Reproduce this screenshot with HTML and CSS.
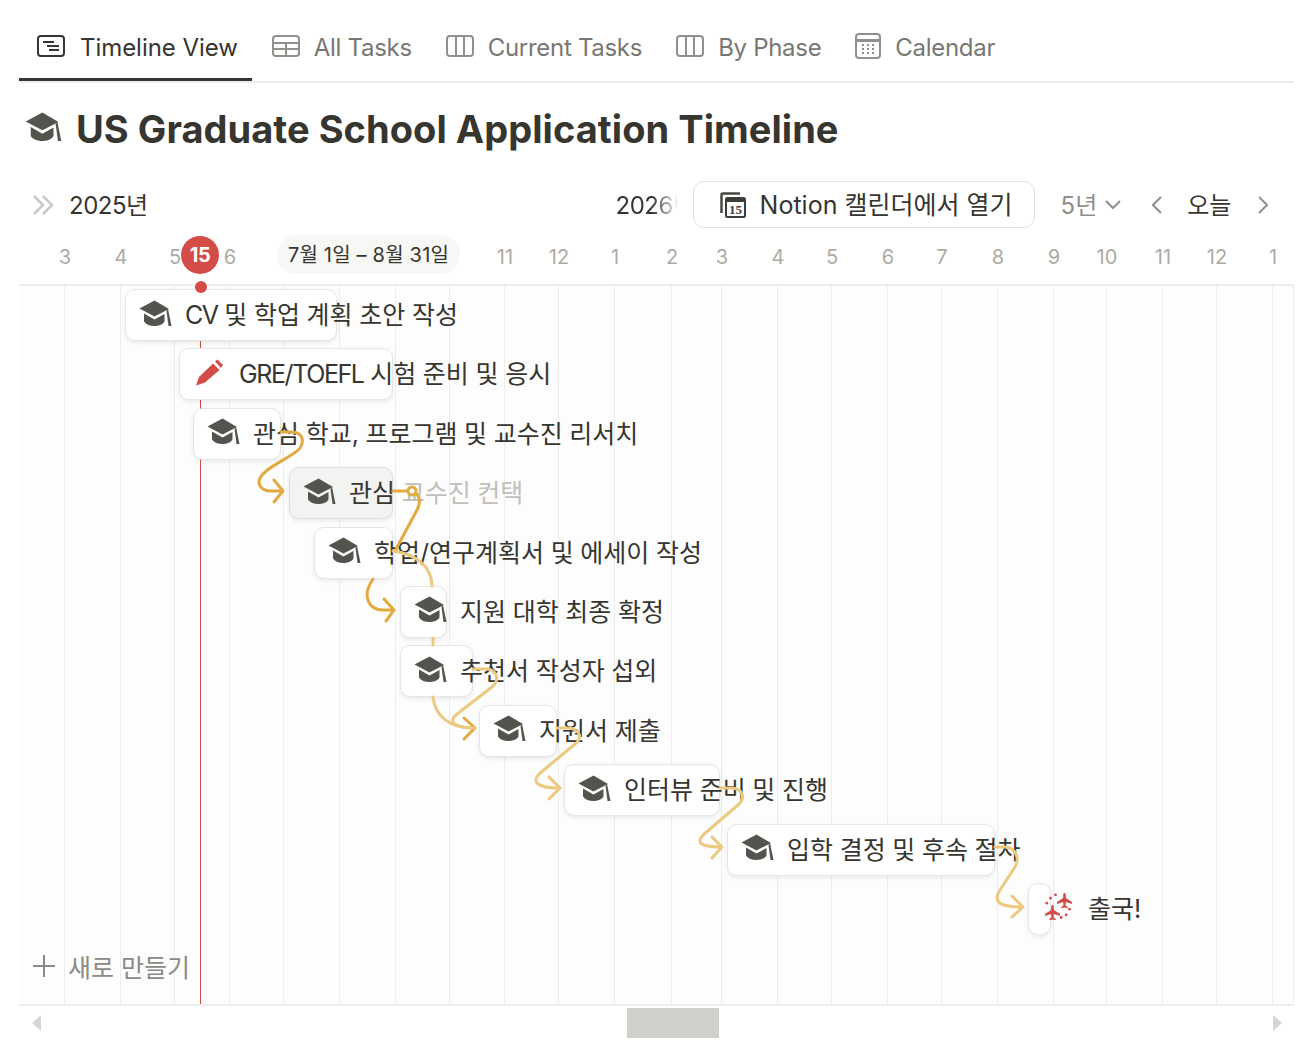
FILE: index.html
```html
<!DOCTYPE html>
<html lang="ko">
<head>
    <meta charset="UTF-8">
    <title>US Graduate School Application Timeline</title>
    <link rel="stylesheet" href="styles.css">
</head>
<body>
    <svg class="defs" width="0" height="0">
        <symbol id="cap" viewBox="0 0 33 27">
            <path d="M15.5 0.5 L0.5 8.5 L15.5 16.5 L30 9 Z" fill="#55534e"/>
            <path d="M5 13.5 L15.5 19.5 L25.5 14 V21.5 C23.5 25 19 26 15.5 26 C11 26 7 24.5 5 21.5 Z" fill="#55534e"/>
            <path d="M29 9 L32.5 26 H29.5 L27.5 11 Z" fill="#55534e"/>
        </symbol>
        <symbol id="plane" viewBox="-8 -8 16 16" overflow="visible">
            <path d="M-1.2 -6.5 Q0 -8.5 1.2 -6.5 L1.4 -2.5 L7.5 1.5 V3.5 L1.4 1.5 L1.1 5 L3.2 6.5 V7.8 L0 7 L-3.2 7.8 V6.5 L-1.1 5 L-1.4 1.5 L-7.5 3.5 V1.5 L-1.4 -2.5 Z" fill="#d44c47"/>
        </symbol>
    </svg>

    <div class="page">
        <nav class="tabs">
            <div class="tab active">
                <svg class="tab-icon" viewBox="0 0 28 22"><rect x="1" y="1" width="26" height="20" rx="3"/><path d="M6 7 H17 M10 11 H22 M12 15 H22"/></svg>
                Timeline View
            </div>
            <div class="tab">
                <svg class="tab-icon" viewBox="0 0 28 22"><rect x="1" y="1" width="26" height="20" rx="3"/><path d="M1 8 H27 M1 14 H27 M14 8 V21"/></svg>
                All Tasks
            </div>
            <div class="tab">
                <svg class="tab-icon" viewBox="0 0 28 22"><rect x="1" y="1" width="26" height="20" rx="3"/><path d="M10 1 V21 M18 1 V21"/></svg>
                Current Tasks
            </div>
            <div class="tab">
                <svg class="tab-icon" viewBox="0 0 28 22"><rect x="1" y="1" width="26" height="20" rx="3"/><path d="M10 1 V21 M18 1 V21"/></svg>
                By Phase
            </div>
            <div class="tab">
                <svg class="tab-icon tab-icon-cal" viewBox="0 0 26 26"><rect x="1" y="1" width="24" height="24" rx="3"/><path d="M1 7.5 H25" stroke-width="3"/><path d="M7 12 H9 M12 12 H14 M17 12 H19 M7 16 H9 M12 16 H14 M17 16 H19 M7 20 H9 M12 20 H14 M17 20 H19" stroke-width="2"/></svg>
                Calendar
            </div>
        </nav>

        <h1 class="title">
            <svg class="title-icon"><use href="#cap"/></svg>
            US Graduate School Application Timeline
        </h1>

        <div class="toolbar">
            <svg class="collapse" viewBox="0 0 22 20"><path d="M2 1 L11 10 L2 19 M11 1 L20 10 L11 19"/></svg>
            <span class="year">2025년</span>
            <span class="year year-next">2026년</span>
            <button class="open-btn">
                <svg class="cal-icon" viewBox="0 0 26 26">
                    <path d="M1.5 21 V3 Q1.5 1.5 3 1.5 H20" fill="none" stroke="#4a4843" stroke-width="2.5"/>
                    <rect x="6" y="6" width="19" height="19" rx="1.5" fill="#fff" stroke="#3f3d39" stroke-width="2"/>
                    <rect x="6" y="6" width="19" height="4" fill="#3f3d39"/>
                    <text x="15.5" y="22" class="cal-num">15</text>
                </svg>
                <span class="nudge">Notion 캘린더에서 열기</span>
            </button>
            <span class="zoom">5년</span>
            <svg class="chev chev-down" viewBox="0 0 16 10"><path d="M1 1 L8 8 L15 1"/></svg>
            <svg class="chev chev-prev" viewBox="0 0 10 18"><path d="M9 1 L1 9 L9 17"/></svg>
            <span class="today">오늘</span>
            <svg class="chev chev-next" viewBox="0 0 10 18"><path d="M1 1 L9 9 L1 17"/></svg>
        </div>

        <div class="months cols">
            <span></span>
            <span>3</span><span>4</span><span>5</span><span>6</span>
            <span></span><span></span><span></span><span></span>
            <span>11</span><span>12</span><span>1</span><span>2</span><span>3</span><span>4</span><span>5</span><span>6</span><span>7</span><span>8</span><span>9</span><span>10</span><span>11</span><span>12</span><span>1</span>
            <div class="today-badge">15</div>
            <div class="range-pill">7월 1일 – 8월 31일</div>
        </div>

        <div class="chart">
            <div class="gridlines cols">
                <i></i><i></i><i></i><i></i><i></i><i></i><i></i><i></i><i></i><i></i><i></i><i></i>
                <i></i><i></i><i></i><i></i><i></i><i></i><i></i><i></i><i></i><i></i><i></i><i></i>
            </div>
            <div class="today-line"></div>
            <div class="today-dot"></div>

            <div class="row"><div class="bar" style="margin-left:106px;width:212px"><svg class="cap"><use href="#cap"/></svg><span><span class="latin">CV</span> 및 학업 계획 초안 작성</span></div></div>
            <div class="row"><div class="bar" style="margin-left:160px;width:214px">
                <svg class="cap" viewBox="0 0 33 27"><path d="M3 26.5 L6 18 L20 4.5 L26.5 11 L12 23.5 Z M22 2.5 L24.5 0.5 L30 6 L28 9 Z" fill="#d44c47"/></svg><span><span class="latin">GRE/TOEFL</span> 시험 준비 및 응시</span></div></div>
            <div class="row"><div class="bar" style="margin-left:174px;width:88px"><svg class="cap"><use href="#cap"/></svg><span>관심 학교, 프로그램 및 교수진 리서치</span></div></div>
            <div class="row"><div class="bar bar-hover" style="margin-left:270px;width:104px"><svg class="cap"><use href="#cap"/></svg><span>관심 <span class="faded">교수진 컨택</span></span></div></div>
            <div class="row"><div class="bar" style="margin-left:295px;width:79px"><svg class="cap"><use href="#cap"/></svg><span>학업/연구계획서 및 에세이 작성</span></div></div>
            <div class="row"><div class="bar" style="margin-left:381px;width:47px"><svg class="cap"><use href="#cap"/></svg><span>지원 대학 최종 확정</span></div></div>
            <div class="row"><div class="bar" style="margin-left:381px;width:73px"><svg class="cap"><use href="#cap"/></svg><span>추천서 작성자 섭외</span></div></div>
            <div class="row"><div class="bar" style="margin-left:460px;width:78px"><svg class="cap"><use href="#cap"/></svg><span>지원서 제출</span></div></div>
            <div class="row"><div class="bar" style="margin-left:545px;width:156px"><svg class="cap"><use href="#cap"/></svg><span>인터뷰 준비 및 진행</span></div></div>
            <div class="row"><div class="bar" style="margin-left:708px;width:268px"><svg class="cap"><use href="#cap"/></svg><span>입학 결정 및 후속 절차</span></div></div>
            <div class="row"><div class="bar" style="margin-left:1009px;width:23px">
                <svg class="cap" viewBox="0 0 33 27">
                    <use href="#plane" x="14.5" y="-0.5" width="16" height="16"/>
                    <use href="#plane" x="2.5" y="11.5" width="16" height="16"/>
                    <g fill="#d44c47"><circle cx="4.8" cy="10.2" r="1.4"/><circle cx="8.5" cy="5.2" r="1.4"/><circle cx="13.5" cy="1.8" r="1.4"/><circle cx="27.5" cy="16.2" r="1.4"/><circle cx="24.2" cy="21.8" r="1.4"/><circle cx="19.2" cy="24.5" r="1.4"/></g>
                </svg><span>출국!</span></div></div>

            <div class="row new-row">
                <svg class="plus" viewBox="0 0 22 22"><path d="M11 0 V22 M0 11 H22"/></svg>
                새로 만들기
            </div>

            <svg class="arrows" viewBox="0 0 1275 719" width="1275" height="719">
                <g class="strong">
                    <path d="M262 146 H272 C283 146 286 154 281 162 C275 171 240 183 240 196 C240 202 246 205 251 205 H264 M255 194 L264 205 L255 216"/>
                    <path d="M374 205 H390 C400 205 403 215 398 224 L376 265"/>
                </g>
                <circle cx="393" cy="205" r="4" class="knob"/>
                <path class="strong" d="M354 293 C342 310 350 324 364 324 H375 M365 313 L375 324 L367 335"/>
                <path class="mid" d="M374 265 C396 268 413 280 413 300"/>
                <path class="mid" d="M414 352 V359 M414 411 C416 430 430 442 455 442"/>
                <path class="strong" d="M445 432 L456 442 L445 453"/>
                <path class="mid" d="M454 383 H468 C478 384 481 394 473 401 L438 428 C428 436 436 442 455 442"/>
                <path class="mid" d="M538 442 H551 C561 444 564 452 556 458 L520 488 C512 497 520 502 541 502 M530 491 L541 502 L530 513"/>
                <path class="mid" d="M701 502 H714 C724 504 727 512 719 519 L684 549 C676 558 684 561 703 561 M693 551 L703 561 L693 572"/>
                <path class="mid" d="M976 561 H986 C997 562 1001 572 996 581 L981 604 C973 617 982 621 1004 621 M993 610 L1004 621 L993 631"/>
            </svg>
        </div>

        <div class="scroll">
            <span class="scroll-arrow scroll-left"></span>
            <div class="scroll-thumb"></div>
            <span class="scroll-arrow scroll-right"></span>
        </div>
    </div>
</body>
</html>
```

FILE: styles.css
```css
* {
    box-sizing: border-box;
}

body {
    margin: 0;
    background-color: white;
    font-family: Inter, "Noto Sans CJK KR", sans-serif;
    color: #37352f;
}

.defs {
    position: absolute;
}

.page {
    height: 1054px;
    padding: 0 10px 0 19px;
    overflow: hidden;
}

/* tabs */
.tabs {
    display: flex;
    gap: 2px;
    height: 83px;
    padding-top: 13px;
    border-bottom: 2px solid #ededec;
}

.tab {
    display: flex;
    align-items: center;
    gap: 14px;
    height: 68px;
    padding: 3px 14px 0 18px;
    border-bottom: 3px solid transparent;
    font-size: 24px;
    letter-spacing: -0.3px;
    color: #787774;
}

.tab.active {
    gap: 15px;
    letter-spacing: -0.05px;
    color: #37352f;
    border-bottom-color: #37352f;
}

.tab-icon {
    width: 28px;
    height: 22px;
    margin-top: -3px;
    fill: none;
    stroke: #91908c;
    stroke-width: 2;
}

.active .tab-icon {
    stroke: #37352f;
}

.tab-icon-cal {
    width: 26px;
    height: 26px;
}

/* title */
.title {
    display: flex;
    align-items: center;
    gap: 14px;
    height: 94px;
    margin: 0;
    padding: 0 0 2px 6px;
    font-size: 38px;
    font-weight: 700;
    letter-spacing: 0.05px;
}

.title-icon {
    width: 37px;
    height: 30px;
    margin-bottom: 4px;
}

/* toolbar */
.toolbar {
    position: relative;
    display: flex;
    align-items: center;
    height: 55px;
    font-size: 24px;
    padding-left: 13px;
}

.collapse {
    width: 22px;
    height: 20px;
    fill: none;
    stroke: #cbc9c4;
    stroke-width: 2.5;
}

.year {
    margin-left: 15px;
    padding-bottom: 3px;
    letter-spacing: -0.5px;
}

.year-next {
    margin-left: 468px;
    width: 66px;
    overflow: hidden;
    white-space: nowrap;
    -webkit-mask-image: linear-gradient(to right, black 55%, transparent 95%);
    mask-image: linear-gradient(to right, black 55%, transparent 95%);
}

.open-btn {
    display: flex;
    align-items: center;
    gap: 14px;
    width: 342px;
    height: 47px;
    margin-left: 11px;
    padding: 0 0 0 26px;
    border: 1px solid #e3e2e0;
    border-radius: 11px;
    background-color: white;
    font-family: inherit;
    font-size: 25px;
    color: #37352f;
}

.nudge {
    padding-bottom: 3px;
}

.cal-icon {
    width: 26px;
    height: 26px;
}

.cal-num {
    font-family: "Liberation Serif", serif;
    font-size: 13px;
    font-weight: 700;
    text-anchor: middle;
    fill: #3f3d39;
}

.zoom {
    margin-left: 26px;
    padding-bottom: 3px;
    color: #8f8e8a;
}

.chev {
    fill: none;
    stroke: #91908c;
    stroke-width: 2;
}

.chev-down {
    width: 16px;
    height: 10px;
    margin-left: 8px;
}

.chev-prev {
    width: 10px;
    height: 18px;
    margin-left: 31px;
}

.today {
    margin-left: 25px;
    padding-bottom: 3px;
}

.chev-next {
    width: 10px;
    height: 18px;
    margin-left: 27px;
}

/* shared month columns so the header and grid line up */
.cols {
    display: grid;
    grid-template-columns: 46px 56px 54px 55px 54px 56px 56px 54px 55px 54px 56px 57px 50px 56px 54px 56px 54px 56px 56px 53px 56px 54px 56px 21px;
}

.months {
    position: relative;
    height: 54px;
    align-items: center;
    border-bottom: 2px solid #ededec;
    font-size: 20px;
    color: #aeaaa3;
}

.months span {
    justify-self: start;
    transform: translate(-50%, -1px);
}

.today-badge {
    position: absolute;
    left: 162px;
    top: 4px;
    width: 38px;
    height: 38px;
    border-radius: 50%;
    background-color: #d44c47;
    color: white;
    font-size: 20px;
    font-weight: 700;
    line-height: 38px;
    text-align: center;
    letter-spacing: -0.5px;
}

.range-pill {
    position: absolute;
    left: 258px;
    top: 3px;
    width: 183px;
    height: 39px;
    border-radius: 20px;
    background-color: #f7f7f5;
    color: #37352f;
    font-size: 20px;
    line-height: 40px;
    text-align: center;
    letter-spacing: 0.2px;
}

/* chart */
.chart {
    position: relative;
    height: 720px;
    padding-top: 3px;
    background-color: #fdfdfd;
    border-bottom: 2px solid #ededec;
}

.gridlines {
    position: absolute;
    inset: 0;
}

.gridlines i {
    border-right: 1px solid #ededec;
}

.today-line {
    position: absolute;
    left: 181px;
    top: 0;
    bottom: 0;
    width: 1px;
    background-color: #d44c47;
}

.today-dot {
    position: absolute;
    left: 176px;
    top: -5px;
    width: 12px;
    height: 12px;
    border-radius: 50%;
    background-color: #d44c47;
    z-index: 2;
}

.row {
    position: relative;
    height: 52px;
    margin-bottom: 7.4px;
}

.bar {
    display: flex;
    align-items: center;
    gap: 13px;
    height: 100%;
    padding: 0 0 4px 13px;
    background-color: white;
    border: 1.5px solid #e6e6e4;
    border-radius: 10px;
    box-shadow: 0 2px 4px rgba(0, 0, 0, 0.08);
    font-size: 25px;
    word-spacing: -0.4px;
    white-space: nowrap;
}

.latin {
    letter-spacing: -1.4px;
}

.bar-hover {
    background-color: #f3f3f2;
    border-color: #dfdfdd;
}

.faded {
    color: #c0bfbc;
}

.cap {
    flex: none;
    width: 33px;
    height: 27px;
}

.new-row {
    display: flex;
    align-items: center;
    gap: 13px;
    padding: 0 0 4px 14px;
    font-size: 25px;
    color: #8b8a86;
}

.plus {
    width: 22px;
    height: 22px;
    fill: none;
    stroke: #8b8a86;
    stroke-width: 2;
}

.arrows {
    position: absolute;
    left: 0;
    top: 0;
    fill: none;
    stroke-width: 3;
    stroke-linecap: round;
    stroke-linejoin: round;
    z-index: 3;
}

.strong {
    stroke: #e2aa3f;
}

.mid {
    stroke: #ebc97f;
}

.knob {
    fill: white;
    stroke: #e2aa3f;
}

/* scrollbar */
.scroll {
    position: relative;
    display: flex;
    justify-content: center;
    height: 30px;
    margin-top: 2px;
}

.scroll-thumb {
    width: 92px;
    height: 30px;
    margin-left: 32px;
    background-color: #d0cfca;
}

.scroll-arrow {
    position: absolute;
    top: 7px;
    width: 0;
    height: 0;
    border-top: 8px solid transparent;
    border-bottom: 8px solid transparent;
}

.scroll-left {
    left: 13px;
    border-right: 9px solid #d6d5d1;
}

.scroll-right {
    left: 1254px;
    border-left: 9px solid #d6d5d1;
}
```
